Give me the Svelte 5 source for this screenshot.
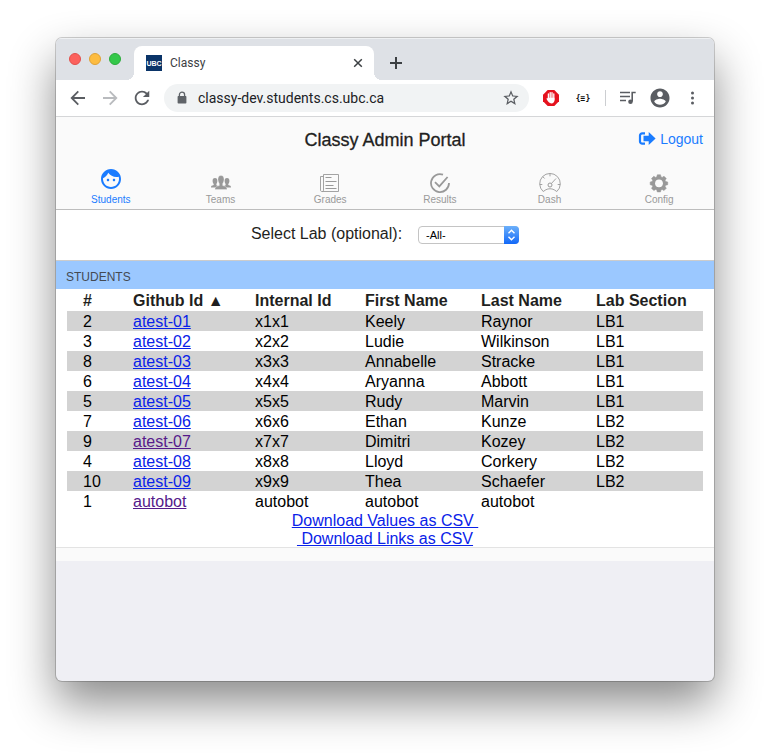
<script>
  const tabs = ['Students', 'Teams', 'Grades', 'Results', 'Dash', 'Config'];
  let active = $state('Students');
  let lab = $state('-All-');
  let url = $state('classy-dev.students.cs.ubc.ca');

  const columns = ['#', 'Github Id ▲', 'Internal Id', 'First Name', 'Last Name', 'Lab Section'];
  const students = [
    { n: 2, github: 'atest-01', id: 'x1x1', first: 'Keely', last: 'Raynor', lab: 'LB1' },
    { n: 3, github: 'atest-02', id: 'x2x2', first: 'Ludie', last: 'Wilkinson', lab: 'LB1' },
    { n: 8, github: 'atest-03', id: 'x3x3', first: 'Annabelle', last: 'Stracke', lab: 'LB1' },
    { n: 6, github: 'atest-04', id: 'x4x4', first: 'Aryanna', last: 'Abbott', lab: 'LB1' },
    { n: 5, github: 'atest-05', id: 'x5x5', first: 'Rudy', last: 'Marvin', lab: 'LB1' },
    { n: 7, github: 'atest-06', id: 'x6x6', first: 'Ethan', last: 'Kunze', lab: 'LB2' },
    { n: 9, github: 'atest-07', id: 'x7x7', first: 'Dimitri', last: 'Kozey', lab: 'LB2', seen: true },
    { n: 4, github: 'atest-08', id: 'x8x8', first: 'Lloyd', last: 'Corkery', lab: 'LB2' },
    { n: 10, github: 'atest-09', id: 'x9x9', first: 'Thea', last: 'Schaefer', lab: 'LB2' },
    { n: 1, github: 'autobot', id: 'autobot', first: 'autobot', last: 'autobot', lab: '', seen: true }
  ];
  const shown = $derived(lab === '-All-' ? students : students.filter((s) => s.lab === lab));
</script>

<div class="window">
  <div class="strip">
    <div class="lights">
      <button class="light red" aria-label="Close window"></button>
      <button class="light amber" aria-label="Minimise window"></button>
      <button class="light green" aria-label="Zoom window"></button>
    </div>
    <div class="browser-tab">
      <span class="favicon">UBC</span>
      <span class="tab-title">Classy</span>
      <button class="plain" aria-label="Close tab">
        <svg width="16" height="16" viewBox="0 0 16 16"><path d="M4.2 4.2l7.6 7.6M11.8 4.2l-7.6 7.6" stroke="#3c4043" stroke-width="1.5" /></svg>
      </button>
    </div>
    <button class="plain new-tab" aria-label="New tab">
      <svg width="16" height="16" viewBox="0 0 16 16"><path d="M8 2v12M2 8h12" stroke="#3c4043" stroke-width="2" /></svg>
    </button>
  </div>

  <div class="toolbar">
    <button class="plain" aria-label="Back">
      <svg width="20" height="20" viewBox="0 0 20 20" fill="none" stroke="#5a5d62" stroke-width="1.8"><path d="M17 10H4M10.3 3.4L3.7 10l6.6 6.6" /></svg>
    </button>
    <button class="plain" aria-label="Forward">
      <svg width="20" height="20" viewBox="0 0 20 20" fill="none" stroke="#b9bbbe" stroke-width="1.8"><path d="M3 10h13M9.7 3.4l6.6 6.6-6.6 6.6" /></svg>
    </button>
    <button class="plain" aria-label="Reload">
      <svg width="20" height="20" viewBox="1 1 22 22" fill="#5a5d62"><path d="M17.65 6.35C16.2 4.9 14.21 4 12 4c-4.42 0-7.99 3.58-7.99 8s3.57 8 7.99 8c3.73 0 6.84-2.55 7.73-6h-2.08c-.82 2.33-3.04 4-5.65 4-3.31 0-6-2.69-6-6s2.69-6 6-6c1.66 0 3.14.69 4.22 1.78L13 11h7V4l-2.35 2.35z" /></svg>
    </button>
    <div class="address">
      <svg width="20" height="20" viewBox="0 0 20 20"><rect x="5.6" y="8" width="8.8" height="7.6" rx="0.8" fill="#5f6368" /><path d="M7.4 8V6.8a2.6 2.6 0 0 1 5.2 0V8" fill="none" stroke="#5f6368" stroke-width="1.3" /></svg>
      <input type="text" aria-label="Address" bind:value={url} />
      <button class="plain" aria-label="Bookmark">
        <svg width="20" height="20" viewBox="-1 -1 26 26" fill="#5a5d62"><path d="M22 9.24l-7.19-.62L12 2 9.19 8.63 2 9.24l5.46 4.73L5.82 21 12 17.27 18.18 21l-1.63-7.03L22 9.24zM12 15.4l-3.76 2.27 1-4.28-3.32-2.88 4.38-.38L12 6.1l1.71 4.04 4.38.38-3.32 2.88 1 4.28L12 15.4z" /></svg>
      </button>
    </div>
    <button class="plain" aria-label="Ad blocker">
      <svg width="20" height="20" viewBox="0 0 20 20"><path d="M6.7 2h6.6L18 6.7v6.6L13.3 18H6.7L2 13.3V6.7z" fill="#e5121e" /><path d="M7.4 6v5M9.2 4.6v6M11 4.6v6M12.8 6v6" stroke="#fff" stroke-width="1.3" stroke-linecap="round" /><path d="M6.8 9.8h6.650v2.4c0 2-1.2 3.2-3 3.2-2.2 0-3.2-1.5-4.9-4.4-.3-.7.5-1.1 1-.6z" fill="#fff" /></svg>
    </button>
    <button class="plain braces" aria-label="JSON viewer">{'{≡}'}</button>
    <span class="divider"></span>
    <button class="plain" aria-label="Media controls">
      <svg width="20" height="20" viewBox="0 0 20 20" fill="none" stroke="#5a5d62" stroke-width="1.6"><path d="M2 4.5h10M2 8.5h10M2 12.5h6M14.2 13.5V4.5h3.5" /><circle cx="12.5" cy="13.8" r="2.3" fill="#5a5d62" stroke="none" /></svg>
    </button>
    <button class="plain" aria-label="Profile">
      <svg width="20" height="20" viewBox="1.5 1.5 21 21" fill="#5a5d62"><path d="M12 2C6.480 2 2 6.480 2 12s4.480 10 10 10 10-4.480 10-10S17.520 2 12 2zm0 3c1.660 0 3 1.340 3 3s-1.340 3-3 3-3-1.340-3-3 1.340-3 3-3zm0 14.200c-2.500 0-4.710-1.280-6-3.220.030-1.990 4-3.080 6-3.080 1.990 0 5.970 1.090 6 3.080-1.290 1.940-3.500 3.220-6 3.220z" /></svg>
    </button>
    <button class="plain" aria-label="Menu">
      <svg width="20" height="20" viewBox="0 0 20 20" fill="#5a5d62"><circle cx="10.5" cy="5" r="1.5" /><circle cx="10.5" cy="10" r="1.5" /><circle cx="10.5" cy="15" r="1.5" /></svg>
    </button>
  </div>

  <header>
    <div class="title-row">
      <h1>Classy Admin Portal</h1>
      <a class="logout" href="#logout">
        <svg width="18" height="16" viewBox="0 0 18 16"><path d="M7 2.3H4.3A2.3 2.3 0 0 0 2 4.6v5.8a2.3 2.3 0 0 0 2.3 2.3H7" fill="none" stroke="#1a7cff" stroke-width="2.2" /><path d="M5.5 4.8h5.2V1L17.6 7.5 10.7 14v-3.8H5.5z" fill="#1a7cff" /></svg>
        Logout
      </a>
    </div>
    <nav>
      {#each tabs as tab}
        <button class="tab" class:active={active === tab} onclick={() => (active = tab)}>
          {#if tab === 'Students'}
            <svg class="raised" width="20" height="20" viewBox="2 2 20 20" fill="currentColor"><path d="M9 11.750c-.690 0-1.250.560-1.250 1.250s.560 1.250 1.250 1.250 1.250-.560 1.250-1.250-.560-1.250-1.250-1.250zm6 0c-.690 0-1.250.560-1.250 1.250s.560 1.250 1.250 1.250 1.250-.560 1.250-1.250-.560-1.250-1.250-1.250zM12 2C6.480 2 2 6.480 2 12s4.480 10 10 10 10-4.480 10-10S17.520 2 12 2zm0 18c-4.410 0-8-3.590-8-8 0-.290.020-.580.050-.860 2.360-1.050 4.230-2.980 5.210-5.370C11.070 8.330 14.050 10 17.420 10c.780 0 1.530-.090 2.250-.260.210.710.330 1.470.330 2.260 0 4.410-3.590 8-8 8z" /></svg>
          {:else if tab === 'Teams'}
            <svg width="20" height="20" viewBox="0 0 20 20" fill="currentColor">
              <path d="M4 5c1.700 0 2.500 1.200 2.400 3-.1 1.500-.6 2.400-1 2.900v1.300l1.600.8-2.200 1.500H0c0-1.700.6-2.100 2.700-2.600V11c-.5-.6-1.100-1.500-1.100-3C1.500 6.200 2.300 5 4 5z" />
              <path d="M16 5c-1.700 0-2.500 1.200-2.400 3 .1 1.500.6 2.400 1 2.900v1.300l-1.600.8 2.200 1.500H20c0-1.700-.6-2.100-2.700-2.600V11c.5-.6 1.100-1.500 1.100-3C18.500 6.200 17.700 5 16 5z" />
              <path d="M10 2.500c2.200 0 3.100 1.700 3 4.100-.1 1.800-.7 3.300-1.300 4v2c2.900.8 4.400 1.400 4.400 4H3.900c0-2.600 1.500-3.200 4.400-4v-2c-.6-.7-1.200-2.200-1.300-4-.1-2.400.8-4.100 3-4.100z" stroke="#fafafa" stroke-width=".3" />
            </svg>
          {:else if tab === 'Grades'}
            <svg width="20" height="20" viewBox="0 0 20 20" fill="none" stroke="currentColor"><path d="M3.500 1.500h15v17H2c-1 0-1.500-.5-1.500-1.500V3.500h3M3.500 1.500V17c0 1-.5 1.500-1.200 1.500" stroke-width=".9" /><path d="M5.500 4.500h6M5.500 8.500h11M5.500 12.500h8M5.500 15.500h11" /></svg>
          {:else if tab === 'Results'}
            <svg width="20" height="20" viewBox="0 0 20 20" fill="none" stroke="currentColor" stroke-width="1.8"><path d="M13 1.600A9 9 0 1 0 19 10M5 9.200l4.300 4.200L17.600 4" /></svg>
          {:else if tab === 'Dash'}
            <svg width="22" height="20" viewBox="0 0 22 20" fill="none" stroke="currentColor"><path d="M4.200 18.500a10.300 10.300 0 1 1 13.600 0l-2.600-1.700c-2.600-1.400-5.800-1.400-8.400 0z" stroke-width=".9" /><circle cx="11" cy="12" r="2" /><path d="M12.400 10.500L17 5.500M11 .8v2.500M3.800 3.700l1.800 1.800M.8 11.500h2.500M18.700 11.500h2.500" stroke-width=".9" /></svg>
          {:else}
            <svg width="20" height="20" viewBox="0 0 20 20"><path d="M8.200 1h3.600l.5 2.300 1.300.6 2.100-1.300 2.500 2.500-1.300 2 .6 1.400 2.300.5v3l-2.300.6-.6 1.300 1.300 2.100-2.500 2.500-2.100-1.300-1.300.6-.5 2.200H8.200l-.5-2.200-1.300-.6-2.100 1.300L1.800 16l1.300-2.100-.6-1.300-2.200-.6V9l2.200-.5.6-1.400-1.300-2 2.500-2.500 2.100 1.300 1.300-.6z" transform="translate(.9 .9) scale(.9)" fill="currentColor" stroke="currentColor" stroke-width=".6" stroke-linejoin="round" /><circle cx="10" cy="10.300" r="3.900" fill="#fafafa" /></svg>
          {/if}
          <span>{tab}</span>
        </button>
      {/each}
    </nav>
  </header>

  <main>
    <div class="filter">
      <label for="lab">Select Lab (optional):</label>
      <span class="select">
        <select id="lab" bind:value={lab}>
          <option>-All-</option>
          <option>LB1</option>
          <option>LB2</option>
        </select>
        <svg width="15" height="18" viewBox="0 0 15 18" fill="none" stroke="#fff" stroke-width="1.4"><path d="M4.5 7.2l3-3 3 3M4.5 10.8l3 3 3-3" /></svg>
      </span>
    </div>
    <section>
      <h2>STUDENTS</h2>
      <table>
        <colgroup>
          <col class="c-num" /><col class="c-git" /><col class="c-int" /><col class="c-first" /><col class="c-last" /><col />
        </colgroup>
        <thead>
          <tr>{#each columns as column}<th scope="col">{column}</th>{/each}</tr>
        </thead>
        <tbody>
          {#each shown as s}
            <tr>
              <td>{s.n}</td>
              <td><a href={'#' + s.github} class:seen={s.seen}>{s.github}</a></td>
              <td>{s.id}</td>
              <td>{s.first}</td>
              <td>{s.last}</td>
              <td>{s.lab}</td>
            </tr>
          {/each}
        </tbody>
      </table>
      <div class="downloads">
        <a href="#values">Download Values as CSV&nbsp;</a>
        <a href="#links">&nbsp;Download Links as CSV</a>
      </div>
    </section>
  </main>
</div>

<style>
  :global(body) {
    background: #fff;
  }
  .window {
    box-sizing: border-box;
    min-height: calc(100vh - 112px);
    margin: 38px 56px 0;
    overflow: hidden;
    display: flex;
    flex-direction: column;
    border-radius: 6px;
    background: #efeff4;
    color: #1f1f21;
    font-family: "Liberation Sans", Arial, sans-serif;
    box-shadow: 0 0 0 1px rgba(0, 0, 0, 0.18), 0 22px 46px rgba(0, 0, 0, 0.46);
  }
  :global(#app) {
    display: flow-root;
    padding-bottom: 74px;
  }
  svg {
    display: block;
    flex: none;
  }
  .plain {
    flex: none;
    display: grid;
    place-items: center;
    padding: 0;
    border: 0;
    background: none;
  }
  .strip {
    display: flex;
    align-items: flex-end;
    height: 42px;
    background: #dee1e6;
    box-shadow: inset 0 1px #eff1f3;
  }
  .lights {
    display: flex;
    gap: 8px;
    padding: 0 13px 15px;
  }
  .light {
    width: 12px;
    height: 12px;
    padding: 0;
    border: 1px solid;
    border-radius: 50%;
  }
  .red {
    background: #fc615d;
    border-color: #e2504c;
  }
  .amber {
    background: #fdbc40;
    border-color: #dfa236;
  }
  .green {
    background: #34c84a;
    border-color: #2cac3c;
  }
  .browser-tab {
    position: relative;
    box-sizing: border-box;
    display: flex;
    align-items: center;
    gap: 8px;
    width: 240px;
    height: 34px;
    padding: 0 8px 0 12px;
    border-radius: 8px 8px 0 0;
    background: #fff;
  }
  .browser-tab::before,
  .browser-tab::after {
    content: "";
    position: absolute;
    bottom: 0;
    width: 8px;
    height: 8px;
  }
  .browser-tab::before {
    right: 100%;
    background: radial-gradient(circle at 0 0, transparent 8px, #fff 8px);
  }
  .browser-tab::after {
    left: 100%;
    background: radial-gradient(circle at 100% 0, transparent 8px, #fff 8px);
  }
  .favicon {
    width: 16px;
    height: 16px;
    overflow: hidden;
    background: #0a3468;
    color: #fff;
    font: bold 7px/18px "Liberation Sans", Arial, sans-serif;
    text-align: center;
  }
  .tab-title {
    flex: 1;
    color: #3c4043;
    font: 12px/16px Roboto, sans-serif;
  }
  .new-tab {
    padding: 0 14px 9px;
  }
  .toolbar {
    display: flex;
    align-items: center;
    gap: 12px;
    height: 36px;
    padding: 0 12px;
    border-bottom: 1px solid #d5d6d8;
    background: #fff;
  }
  .address {
    flex: 1;
    min-width: 0;
    display: flex;
    align-items: center;
    gap: 6px;
    height: 28px;
    padding: 0 8px;
    border-radius: 14px;
    background: #f1f3f4;
  }
  .address input {
    flex: 1;
    min-width: 0;
    padding: 0;
    border: 0;
    outline: 0;
    background: none;
    color: #202124;
    font: 14px/20px Roboto, sans-serif;
  }
  .braces {
    width: 20px;
    padding-top: 2px;
    color: #111;
    font: bold 8px/20px "DejaVu Sans Mono", monospace;
  }
  .divider {
    width: 1px;
    height: 16px;
    background: #ccced1;
  }
  header {
    border-bottom: 1px solid #bdbdbd;
    background: #fafafa;
  }
  .title-row {
    display: grid;
    grid-template-columns: 1fr auto 1fr;
    align-items: center;
    height: 44px;
    padding: 0 11px;
  }
  h1 {
    grid-column: 2;
    margin: 0;
    padding-top: 2px;
    font-size: 18px;
    line-height: 20px;
    font-weight: 400;
    -webkit-text-stroke: 0.3px #1f1f21;
  }
  .logout {
    justify-self: end;
    display: flex;
    align-items: center;
    gap: 4px;
    color: #1a7cff;
    font-size: 14px;
    line-height: 20px;
    text-decoration: none;
  }
  nav {
    display: flex;
    height: 48px;
  }
  .tab {
    flex: 1;
    display: flex;
    flex-direction: column;
    align-items: center;
    justify-content: flex-end;
    gap: 1px;
    padding: 0 0 4px;
    border: 0;
    background: none;
    color: #999;
    font: 10px/11px "Liberation Sans", Arial, sans-serif;
  }
  .tab.active {
    color: #1a7cff;
  }
  .raised {
    margin-bottom: 4px;
  }
  main {
    border-bottom: 13px solid #fafafa;
    background: #fff;
  }
  .filter {
    display: flex;
    align-items: center;
    justify-content: center;
    gap: 16px;
    height: 50px;
    border-bottom: 1px solid #ccc;
    font-size: 16px;
    line-height: 20px;
  }
  .filter label {
    padding-bottom: 2px;
  }
  .select {
    position: relative;
  }
  select {
    display: block;
    width: 101px;
    height: 18px;
    padding: 0 20px 0 7px;
    appearance: none;
    border: 1px solid #c4c4c4;
    border-radius: 4px;
    background: #fff;
    color: #000;
    font: 11px/16px "Liberation Sans", Arial, sans-serif;
  }
  .select svg {
    position: absolute;
    top: 0;
    right: 0;
    border-radius: 0 4px 4px 0;
    background: linear-gradient(#6cb0fa, #1268f8);
    pointer-events: none;
  }
  section {
    border-bottom: 1px solid #e3e3e3;
  }
  h2 {
    margin: 0;
    padding: 4px 10px 0;
    background: #9bc8ff;
    color: #444a52;
    font-size: 12px;
    line-height: 24px;
    font-weight: 400;
  }
  table {
    width: calc(100% - 22px);
    margin: 2px 11px 0;
    border-collapse: collapse;
    table-layout: fixed;
    font-size: 16px;
    line-height: 20px;
  }
  .c-num {
    width: 50px;
  }
  .c-git {
    width: 122px;
  }
  .c-int {
    width: 110px;
  }
  .c-first {
    width: 116px;
  }
  .c-last {
    width: 115px;
  }
  th,
  td {
    padding: 0 0 0 16px;
    text-align: left;
    white-space: nowrap;
  }
  td {
    height: 18px;
    padding-top: 2px;
    line-height: 18px;
    color: #000;
  }
  tbody tr:nth-child(odd) {
    background: #d3d3d3;
  }
  table a,
  .downloads a {
    color: #0a22e8;
  }
  table a.seen {
    color: #551a8b;
  }
  .downloads {
    display: flex;
    flex-direction: column;
    align-items: center;
    font-size: 16px;
    line-height: 16px;
  }
  .downloads a {
    padding-top: 2px;
  }
</style>
